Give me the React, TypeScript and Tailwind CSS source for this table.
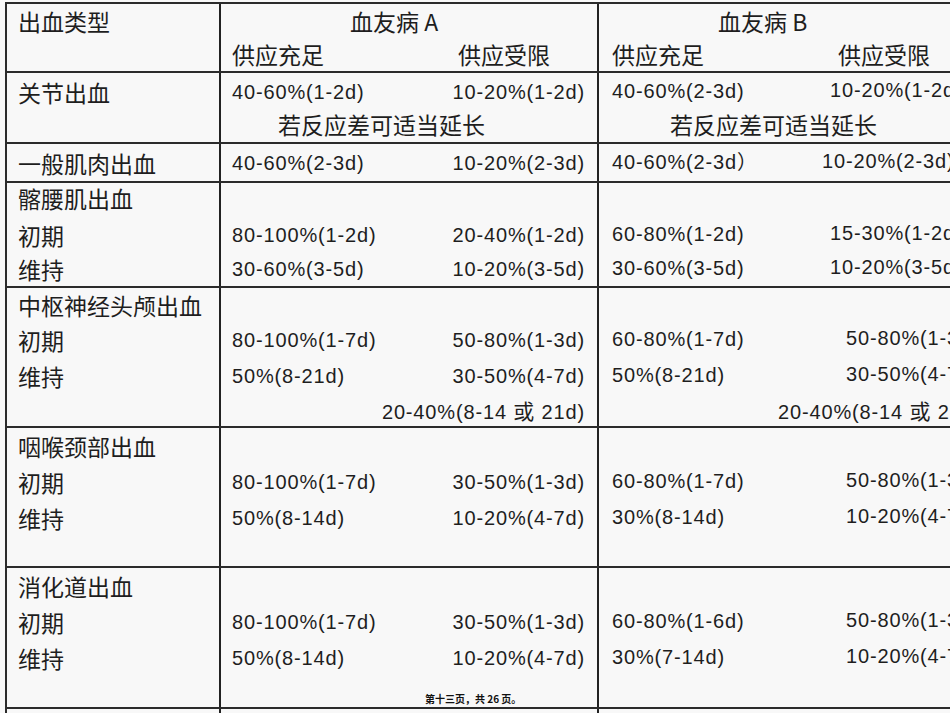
import React from "react";

const NUM = "font-['Liberation_Sans','Noto_Sans_CJK_SC',sans-serif] text-[20px] tracking-[0.85px] leading-none";
const CJK = "font-['Noto_Sans_CJK_SC',sans-serif] text-[23px] leading-none";

type Col = React.ReactNode[];

function Column({ mts, lines, className }: { mts: string[]; lines: Col; className: string }) {
  return (
    <div className={`${className} flex flex-col overflow-hidden`}>
      {lines.map((ln, i) => (
        <div key={i} className={`${mts[i]} h-[30px] flex items-center whitespace-nowrap shrink-0`}>
          {ln}
        </div>
      ))}
    </div>
  );
}

function Row({ h, mts, c1, a, b, last }: { h: string; mts: string[]; c1: Col; a: Col; b: Col; last?: boolean }) {
  return (
    <div className={`${h} flex ${last ? "" : "border-b-2 border-[#2b2b2b]"}`}>
      <Column mts={mts} lines={c1} className="w-[214px] shrink-0 border-r-2 border-[#222]" />
      <Column mts={mts} lines={a} className="w-[378px] shrink-0 border-r-2 border-[#222]" />
      <Column mts={mts} lines={b} className="w-[400px] shrink-0" />
    </div>
  );
}

const C1 = (t: string) => <span className={`${CJK} pl-[11px]`}>{t}</span>;

function Num({ t }: { t: string }) {
  const parts = t.split("或");
  if (parts.length === 1) return <span className={NUM}>{t}</span>;
  return (
    <span className={NUM}>
      {parts[0]}
      <span className="font-['Noto_Sans_CJK_SC',sans-serif] text-[21px]">或</span>
      {parts[1]}
    </span>
  );
}

function ASplit({ l, r }: { l: string; r: string }) {
  return (
    <div className="flex w-full justify-between pl-[11px] pr-[12px]">
      <Num t={l} />
      <Num t={r} />
    </div>
  );
}

function BSplit({ l, r, w }: { l: string; r: string; w: string }) {
  return (
    <div className="flex">
      <div className={`${w} shrink-0 pl-[13px]`}>
        <Num t={l} />
      </div>
      <Num t={r} />
    </div>
  );
}

export default function App() {
  return (
    <div className="relative w-[950px] h-[713px] overflow-hidden bg-[#f8f8f8] text-[#1e1e1e] pt-[2px] pl-[5px]">
      <div className="border-t-2 border-l-2 border-[#2b2b2b] w-[1000px]">
        <Row
          h="h-[69px]"
          mts={["mt-[2px]", "mt-[5px]"]}
          c1={[C1("出血类型")]}
          a={[
            <span className={`${CJK} ml-[129px]`}>血友病 A</span>,
            <div className="flex">
              <div className="w-[237px] shrink-0 pl-[11px]">
                <span className={CJK}>供应充足</span>
              </div>
              <span className={CJK}>供应受限</span>
            </div>,
          ]}
          b={[
            <span className={`${CJK} ml-[119px]`}>血友病 B</span>,
            <div className="flex">
              <div className="w-[239px] shrink-0 pl-[13px]">
                <span className={CJK}>供应充足</span>
              </div>
              <span className={CJK}>供应受限</span>
            </div>,
          ]}
        />
        <Row
          h="h-[71px]"
          mts={["mt-[4px]", "mt-[2px]"]}
          c1={[C1("关节出血")]}
          a={[
            <ASplit l="40-60%(1-2d)" r="10-20%(1-2d)" />,
            <span className={`${CJK} ml-[57px]`}>若反应差可适当延长</span>,
          ]}
          b={[
            <BSplit l="40-60%(2-3d)" r="10-20%(1-2d)" w="w-[231px]" />,
            <span className={`${CJK} ml-[71px]`}>若反应差可适当延长</span>,
          ]}
        />
        <Row
          h="h-[39px]"
          mts={["mt-[4px]"]}
          c1={[C1("一般肌肉出血")]}
          a={[<ASplit l="40-60%(2-3d)" r="10-20%(2-3d)" />]}
          b={[<BSplit l="40-60%(2-3d）" r="10-20%(2-3d)" w="w-[223px]" />]}
        />
        <Row
          h="h-[105px]"
          mts={["mt-[0px]", "mt-[7px]", "mt-[4px]"]}
          c1={[C1("髂腰肌出血"), C1("初期"), C1("维持")]}
          a={[
            null,
            <ASplit l="80-100%(1-2d)" r="20-40%(1-2d)" />,
            <ASplit l="30-60%(3-5d)" r="10-20%(3-5d)" />,
          ]}
          b={[
            null,
            <BSplit l="60-80%(1-2d)" r="15-30%(1-2d)" w="w-[231px]" />,
            <BSplit l="30-60%(3-5d)" r="10-20%(3-5d)" w="w-[231px]" />,
          ]}
        />
        <Row
          h="h-[140px]"
          mts={["mt-[2px]", "mt-[5px]", "mt-[6px]", "mt-[5px]"]}
          c1={[C1("中枢神经头颅出血"), C1("初期"), C1("维持"), null]}
          a={[
            null,
            <ASplit l="80-100%(1-7d)" r="50-80%(1-3d)" />,
            <ASplit l="50%(8-21d)" r="30-50%(4-7d)" />,
            <ASplit l="" r="20-40%(8-14 或 21d)" />,
          ]}
          b={[
            null,
            <BSplit l="60-80%(1-7d)" r="50-80%(1-3d)" w="w-[247px]" />,
            <BSplit l="50%(8-21d)" r="30-50%(4-7d)" w="w-[247px]" />,
            <BSplit l="" r="20-40%(8-14 或 21d)" w="w-[179px]" />,
          ]}
        />
        <Row
          h="h-[140px]"
          mts={["mt-[3px]", "mt-[6px]", "mt-[6px]"]}
          c1={[C1("咽喉颈部出血"), C1("初期"), C1("维持")]}
          a={[
            null,
            <ASplit l="80-100%(1-7d)" r="30-50%(1-3d)" />,
            <ASplit l="50%(8-14d)" r="10-20%(4-7d)" />,
          ]}
          b={[
            null,
            <BSplit l="60-80%(1-7d)" r="50-80%(1-3d)" w="w-[247px]" />,
            <BSplit l="30%(8-14d)" r="10-20%(4-7d)" w="w-[247px]" />,
          ]}
        />
        <Row
          h="h-[141px]"
          mts={["mt-[3px]", "mt-[6px]", "mt-[6px]"]}
          c1={[C1("消化道出血"), C1("初期"), C1("维持")]}
          a={[
            null,
            <ASplit l="80-100%(1-7d)" r="30-50%(1-3d)" />,
            <ASplit l="50%(8-14d)" r="10-20%(4-7d)" />,
          ]}
          b={[
            null,
            <BSplit l="60-80%(1-6d)" r="50-80%(1-3d)" w="w-[247px]" />,
            <BSplit l="30%(7-14d)" r="10-20%(4-7d)" w="w-[247px]" />,
          ]}
        />
        <Row h="h-[10px]" mts={[]} c1={[]} a={[]} b={[]} last />
      </div>
      <div className="absolute left-[425px] top-[694px] font-['Noto_Sans_CJK_SC',sans-serif] text-[10px] leading-none font-bold text-[#111] whitespace-nowrap">
        第十三页，共 26 页。
      </div>
    </div>
  );
}
